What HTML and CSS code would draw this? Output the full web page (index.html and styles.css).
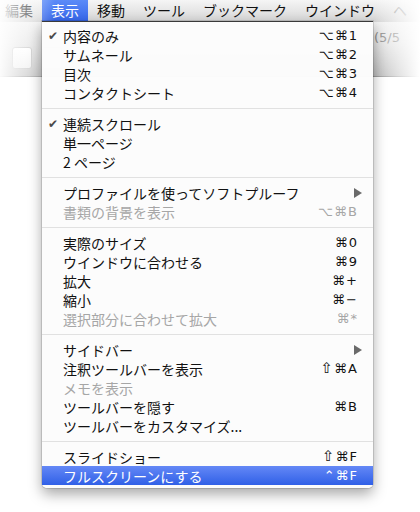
FILE: index.html
```html
<!DOCTYPE html>
<html lang="ja">
<head>
<meta charset="utf-8">
<link rel="stylesheet" href="styles.css">
</head>
<body>
<div class="screen">
  <div class="menubar">
    <span class="mb-item first">編集</span>
    <span class="mb-item active">表示</span>
    <span class="mb-item">移動</span>
    <span class="mb-item">ツール</span>
    <span class="mb-item">ブックマーク</span>
    <span class="mb-item">ウインドウ</span>
    <span class="mb-item faded">ヘ</span>
  </div>
  <div class="toolbar">
    <div class="seg"><span class="btn"></span><span class="btn"></span></div>
    <div class="title">(5/5</div>
  </div>
  <div class="doc"></div>
  <div class="vignette"></div>

  <div class="menu">
    <div class="row"><span class="chk">✔</span><span class="lbl">内容のみ</span><span class="key">⌥⌘1</span></div>
    <div class="row"><span class="chk"></span><span class="lbl">サムネール</span><span class="key">⌥⌘2</span></div>
    <div class="row"><span class="chk"></span><span class="lbl">目次</span><span class="key">⌥⌘3</span></div>
    <div class="row"><span class="chk"></span><span class="lbl">コンタクトシート</span><span class="key">⌥⌘4</span></div>
    <div class="sep"></div>
    <div class="row"><span class="chk">✔</span><span class="lbl">連続スクロール</span><span class="key"></span></div>
    <div class="row"><span class="chk"></span><span class="lbl">単一ページ</span><span class="key"></span></div>
    <div class="row"><span class="chk"></span><span class="lbl">2 ページ</span><span class="key"></span></div>
    <div class="sep"></div>
    <div class="row"><span class="chk"></span><span class="lbl">プロファイルを使ってソフトプルーフ</span><span class="arrow"></span></div>
    <div class="row dis"><span class="chk"></span><span class="lbl">書類の背景を表示</span><span class="key">⌥⌘B</span></div>
    <div class="sep"></div>
    <div class="row"><span class="chk"></span><span class="lbl">実際のサイズ</span><span class="key">⌘0</span></div>
    <div class="row"><span class="chk"></span><span class="lbl">ウインドウに合わせる</span><span class="key">⌘9</span></div>
    <div class="row"><span class="chk"></span><span class="lbl">拡大</span><span class="key">⌘+</span></div>
    <div class="row"><span class="chk"></span><span class="lbl">縮小</span><span class="key">⌘−</span></div>
    <div class="row dis"><span class="chk"></span><span class="lbl">選択部分に合わせて拡大</span><span class="key">⌘*</span></div>
    <div class="sep"></div>
    <div class="row"><span class="chk"></span><span class="lbl">サイドバー</span><span class="arrow"></span></div>
    <div class="row"><span class="chk"></span><span class="lbl">注釈ツールバーを表示</span><span class="key"><span class="shift">⇧</span>⌘A</span></div>
    <div class="row dis"><span class="chk"></span><span class="lbl">メモを表示</span><span class="key"></span></div>
    <div class="row"><span class="chk"></span><span class="lbl">ツールバーを隠す</span><span class="key">⌘B</span></div>
    <div class="row"><span class="chk"></span><span class="lbl">ツールバーをカスタマイズ...</span><span class="key"></span></div>
    <div class="sep"></div>
    <div class="row"><span class="chk"></span><span class="lbl">スライドショー</span><span class="key"><span class="shift">⇧</span>⌘F</span></div>
    <div class="row hl"><span class="chk"></span><span class="lbl">フルスクリーンにする</span><span class="key">⌃⌘F</span></div>
  </div>
</div>
</body>
</html>
```

FILE: styles.css
```css
html, body {
  margin: 0;
  padding: 0;
  background: #ffffff;
}

.screen {
  position: relative;
  width: 420px;
  height: 512px;
  overflow: hidden;
  font-family: "Noto Sans CJK JP", "Liberation Sans", sans-serif;
  font-size: 14px;
  color: #111;
}

.menubar {
  display: flex;
  height: 22px;
  background: linear-gradient(#f5f5f5, #d6d6d6);
  white-space: nowrap;
}

.mb-item {
  padding: 0 9px;
  line-height: 21px;
  height: 22px;
  color: #111;
}

.mb-item.first {
  margin-left: -4px;
}

.mb-item.active {
  background: linear-gradient(#5b8bf8, #3565ea);
  color: #fff;
}

.mb-item.faded {
  color: #999;
}

.toolbar {
  display: flex;
  justify-content: space-between;
  align-items: flex-start;
  height: 54px;
  background: linear-gradient(#f1f1f1 0%, #e2e2e2 40%, #bdbdbd 100%);
  border-bottom: 1px solid #9a9a9a;
}

.seg {
  display: flex;
  gap: 10px;
  padding: 25px 0 0 12px;
}

.btn {
  display: block;
  width: 18px;
  height: 20px;
  border: 1px solid #bdbdbd;
  border-radius: 3px;
  background: linear-gradient(#fff, #ececec);
}

.title {
  padding: 7px 0 0 0;
  width: 46px;
  color: #8a8a8a;
  font-family: "DejaVu Sans", sans-serif;
  font-size: 13px;
  line-height: 18px;
  white-space: nowrap;
}

.doc {
  height: 435px;
  background: #fff;
}

.vignette {
  position: absolute;
  inset: 0;
  pointer-events: none;
  background:
    linear-gradient(to right, rgba(255,255,255,0.95) 0px, rgba(255,255,255,0.55) 22px, rgba(255,255,255,0) 55px, rgba(255,255,255,0) 375px, rgba(255,255,255,0.6) 400px, rgba(255,255,255,1) 420px);
}

.menu {
  position: absolute;
  top: 21px;
  left: 42px;
  width: 331px;
  padding: 4px 0 3px;
  background: rgba(252, 252, 252, 0.98);
  border-top: 1px solid #3a3a3a;
  border-radius: 0 0 5px 5px;
  box-shadow: 0 0 0 1px rgba(0,0,0,0.12), 0 6px 14px rgba(0,0,0,0.35);
}

.row {
  display: grid;
  grid-template-columns: 21px 1fr auto;
  align-items: center;
  height: 19px;
  line-height: 18px;
  padding-right: 15px;
  white-space: nowrap;
}

.chk {
  padding-left: 6px;
  font-family: "DejaVu Sans", sans-serif;
  font-size: 12px;
  color: #4a4a4a;
}

.key {
  font-family: "DejaVu Sans", sans-serif;
  font-size: 13px;
  letter-spacing: 1px;
  color: #111;
}

.shift {
  font-size: 15px;
}

.arrow {
  width: 0;
  height: 0;
  margin-right: -4px;
  border-top: 5px solid transparent;
  border-bottom: 5px solid transparent;
  border-left: 8px solid #6a6a6a;
}

.dis .lbl,
.dis .key {
  color: #a6a6a6;
}

.hl {
  background: linear-gradient(#6488f6, #3060e7);
}

.hl .lbl,
.hl .key {
  color: #fff;
}

.sep {
  height: 12px;
  display: flex;
  align-items: center;
}

.sep::before {
  content: "";
  display: block;
  width: 100%;
  height: 1px;
  background: #e1e1e1;
}
```
